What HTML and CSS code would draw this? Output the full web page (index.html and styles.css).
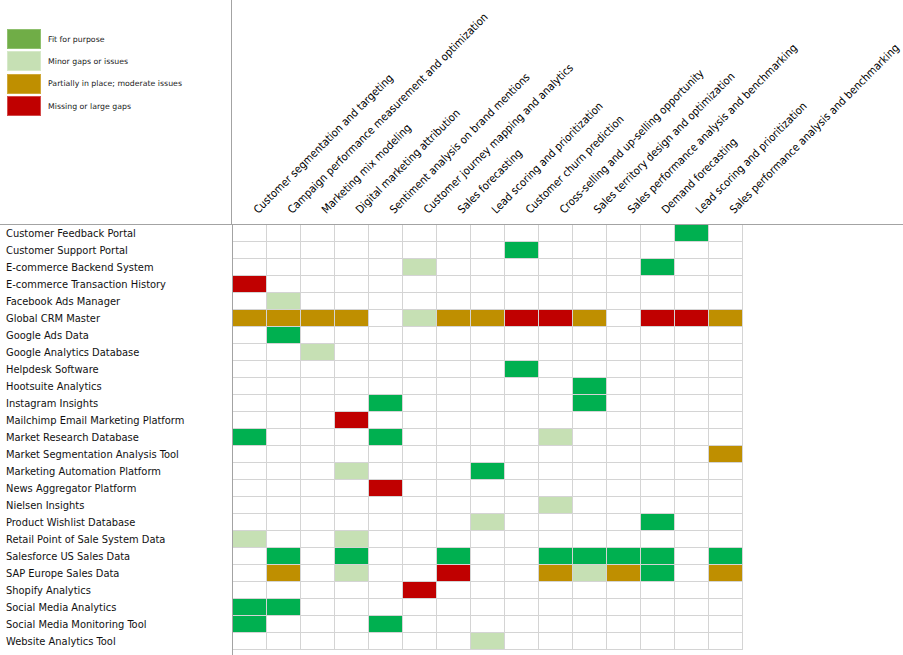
FILE: index.html
```html
<!DOCTYPE html>
<html lang="en">
<head>
<meta charset="utf-8">
<title>Capability Fit Matrix</title>
<link rel="stylesheet" href="styles.css">
</head>
<body>
<div class="sheet">
  <div class="head">
    <div class="legend-area">
      <div class="legend-item"><span class="sw sw-fit"></span><span class="lt">Fit for purpose</span></div>
      <div class="legend-item"><span class="sw sw-minor"></span><span class="lt">Minor gaps or issues</span></div>
      <div class="legend-item"><span class="sw sw-part"></span><span class="lt">Partially in place; moderate issues</span></div>
      <div class="legend-item"><span class="sw sw-miss"></span><span class="lt">Missing or large gaps</span></div>
    </div>
    <div class="col-heads">
      <div class="ch"><span class="lbl">Customer segmentation and targeting</span></div>
      <div class="ch"><span class="lbl">Campaign performance measurement and optimization</span></div>
      <div class="ch"><span class="lbl">Marketing mix modeling</span></div>
      <div class="ch"><span class="lbl">Digital marketing attribution</span></div>
      <div class="ch"><span class="lbl">Sentiment analysis on brand mentions</span></div>
      <div class="ch"><span class="lbl">Customer journey mapping and analytics</span></div>
      <div class="ch"><span class="lbl">Sales forecasting</span></div>
      <div class="ch"><span class="lbl">Lead scoring and prioritization</span></div>
      <div class="ch"><span class="lbl">Customer churn prediction</span></div>
      <div class="ch"><span class="lbl">Cross-selling and up-selling opportunity</span></div>
      <div class="ch"><span class="lbl">Sales territory design and optimization</span></div>
      <div class="ch"><span class="lbl">Sales performance analysis and benchmarking</span></div>
      <div class="ch"><span class="lbl">Demand forecasting</span></div>
      <div class="ch"><span class="lbl">Lead scoring and prioritization</span></div>
      <div class="ch"><span class="lbl">Sales performance analysis and benchmarking</span></div>
    </div>
  </div>
  <div class="body">
    <div class="labels">
      <div class="rl">Customer Feedback Portal</div>
      <div class="rl">Customer Support Portal</div>
      <div class="rl">E-commerce Backend System</div>
      <div class="rl">E-commerce Transaction History</div>
      <div class="rl">Facebook Ads Manager</div>
      <div class="rl">Global CRM Master</div>
      <div class="rl">Google Ads Data</div>
      <div class="rl">Google Analytics Database</div>
      <div class="rl">Helpdesk Software</div>
      <div class="rl">Hootsuite Analytics</div>
      <div class="rl">Instagram Insights</div>
      <div class="rl">Mailchimp Email Marketing Platform</div>
      <div class="rl">Market Research Database</div>
      <div class="rl">Market Segmentation Analysis Tool</div>
      <div class="rl">Marketing Automation Platform</div>
      <div class="rl">News Aggregator Platform</div>
      <div class="rl">Nielsen Insights</div>
      <div class="rl">Product Wishlist Database</div>
      <div class="rl">Retail Point of Sale System Data</div>
      <div class="rl">Salesforce US Sales Data</div>
      <div class="rl">SAP Europe Sales Data</div>
      <div class="rl">Shopify Analytics</div>
      <div class="rl">Social Media Analytics</div>
      <div class="rl">Social Media Monitoring Tool</div>
      <div class="rl">Website Analytics Tool</div>
    </div>
    <div class="grid" id="grid"></div>
  </div>
</div>
<script src="script.js"></script>
</body>
</html>
```
FILE: styles.css
```css
html, body {
  margin: 0;
  padding: 0;
  background: #ffffff;
}
body {
  font-family: "DejaVu Sans Condensed", "DejaVu Sans", sans-serif;
  color: #111111;
}
.sheet {
  display: flex;
  flex-direction: column;
  width: 903px;
  height: 655px;
  overflow: hidden;
}
.head {
  display: flex;
  height: 224px;
  flex: none;
  border-bottom: 1px solid #a3a3a3;
}
.legend-area {
  width: 232px;
  flex: none;
  border-right: 1px solid #a3a3a3;
  padding: 29px 0 0 7px;
  box-sizing: border-box;
  display: flex;
  flex-direction: column;
  gap: 2.4px;
}
.legend-item {
  display: flex;
  align-items: center;
  gap: 7px;
}
.sw {
  width: 34px;
  height: 20px;
  box-sizing: border-box;
  flex: none;
}
.sw-fit { background: #70ad47; border: 1px solid #8fc06e; }
.sw-minor { background: #c6e0b4; border: 1px solid #d6e9c9; }
.sw-part { background: #bf8f00; border: 1px solid #d0a93a; }
.sw-miss { background: #c00000; border: 1px solid #d34a4a; }
.lt {
  font-family: "DejaVu Sans", sans-serif;
  font-size: 7.8px;
  line-height: 10px;
  padding-top: 1px;
  color: #222222;
}
.col-heads {
  display: flex;
  flex: 1;
}
.ch {
  width: 34px;
  flex: none;
  position: relative;
}
.lbl {
  position: absolute;
  left: 29px;
  bottom: 7px;
  white-space: nowrap;
  font-size: 11.1px;
  line-height: 14px;
  color: #000000;
  transform-origin: 0 100%;
  transform: rotate(-45deg);
}
.body {
  display: flex;
  flex: 1;
}
.labels {
  width: 232px;
  flex: none;
  border-right: 1px solid #a3a3a3;
}
.rl {
  height: 17px;
  line-height: 18px;
  padding-left: 6px;
  font-size: 11px;
  white-space: nowrap;
}
.grid {
  display: grid;
  grid-template-columns: repeat(15, 34px);
  grid-auto-rows: 17px;
  align-content: start;
}
.cell {
  box-sizing: border-box;
  border-right: 1px solid #d4d4d4;
  border-bottom: 1px solid #d4d4d4;
}
.c-g { background: #00b050; }
.c-l { background: #c6e0b4; }
.c-o { background: #bf8f00; }
.c-r { background: #c00000; }
```
FILE: script.js
```js
(function () {
  // One string per source row, one character per capability column:
  // g = fit for purpose, l = minor gaps, o = partially in place, r = missing, . = not assessed
  var rows = [
    ".............g.",
    "........g......",
    ".....l......g..",
    "r..............",
    ".l.............",
    "oooo.loorro.rro",
    ".g.............",
    "..l............",
    "........g......",
    "..........g....",
    "....g.....g....",
    "...r...........",
    "g...g....l.....",
    "..............o",
    "...l...g.......",
    "....r..........",
    ".........l.....",
    ".......l....g..",
    "l..l...........",
    ".g.g..g..gggg.g",
    ".o.l..r..olog.o",
    ".....r.........",
    "gg.............",
    "g...g..........",
    ".......l......."
  ];
  var cls = { g: " c-g", l: " c-l", o: " c-o", r: " c-r" };
  var grid = document.getElementById("grid");
  var frag = document.createDocumentFragment();
  rows.forEach(function (r) {
    for (var i = 0; i < 15; i++) {
      var d = document.createElement("div");
      d.className = "cell" + (cls[r.charAt(i)] || "");
      frag.appendChild(d);
    }
  });
  grid.appendChild(frag);
})();
```
